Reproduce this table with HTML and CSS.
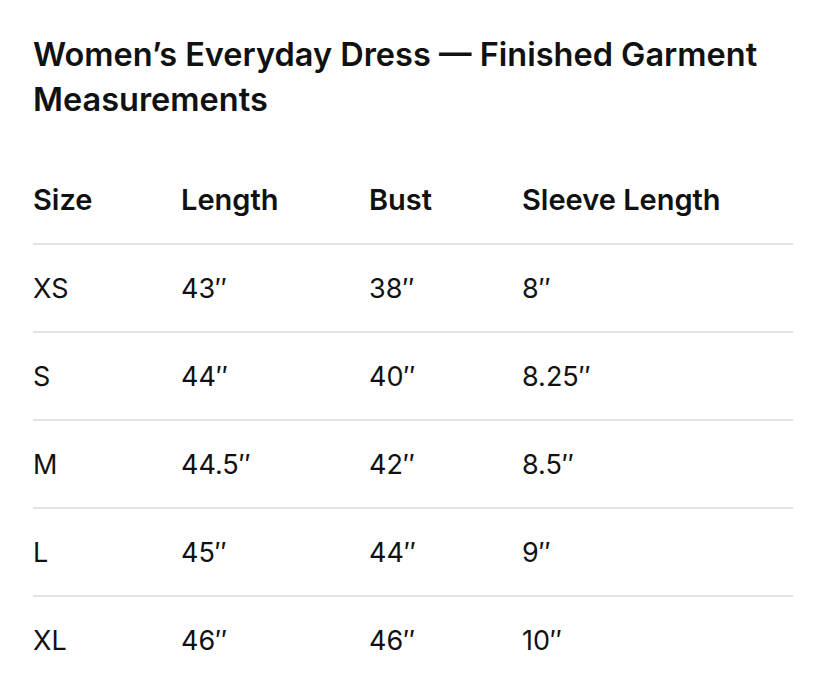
FILE: index.html
```html
<!DOCTYPE html>
<html lang="en">
<head>
<meta charset="utf-8">
<title>Women’s Everyday Dress — Finished Garment Measurements</title>
<link rel="stylesheet" href="styles.css">
</head>
<body>
<main class="page">
  <h1 class="title">Women’s Everyday Dress — Finished Garment Measurements</h1>
  <div class="table">
    <div class="row head">
      <div class="cell">Size</div>
      <div class="cell">Length</div>
      <div class="cell">Bust</div>
      <div class="cell">Sleeve Length</div>
    </div>
    <div class="row">
      <div class="cell">XS</div>
      <div class="cell">43″</div>
      <div class="cell">38″</div>
      <div class="cell">8″</div>
    </div>
    <div class="row">
      <div class="cell">S</div>
      <div class="cell">44″</div>
      <div class="cell">40″</div>
      <div class="cell">8.25″</div>
    </div>
    <div class="row">
      <div class="cell">M</div>
      <div class="cell">44.5″</div>
      <div class="cell">42″</div>
      <div class="cell">8.5″</div>
    </div>
    <div class="row">
      <div class="cell">L</div>
      <div class="cell">45″</div>
      <div class="cell">44″</div>
      <div class="cell">9″</div>
    </div>
    <div class="row">
      <div class="cell">XL</div>
      <div class="cell">46″</div>
      <div class="cell">46″</div>
      <div class="cell">10″</div>
    </div>
  </div>
</main>
</body>
</html>
```
FILE: styles.css
```css
html, body {
  margin: 0;
  padding: 0;
  background: #ffffff;
}
body {
  font-family: Inter, "Liberation Sans", sans-serif;
  color: #111111;
}
.page {
  padding: 32px 24px 0 33px;
}
.title {
  margin: 0;
  font-size: 32.5px;
  font-weight: 600;
  line-height: 45px;
}
.table {
  margin-top: 33px;
}
.row {
  display: grid;
  grid-template-columns: 148px 188px 153px 1fr;
  height: 88px;
  align-items: center;
  font-size: 27px;
  border-top: 2px solid #e3e3e3;
  box-sizing: border-box;
}
.row.head {
  border-top: none;
  font-size: 29px;
  font-weight: 600;
}
.cell {
  white-space: nowrap;
}
```
